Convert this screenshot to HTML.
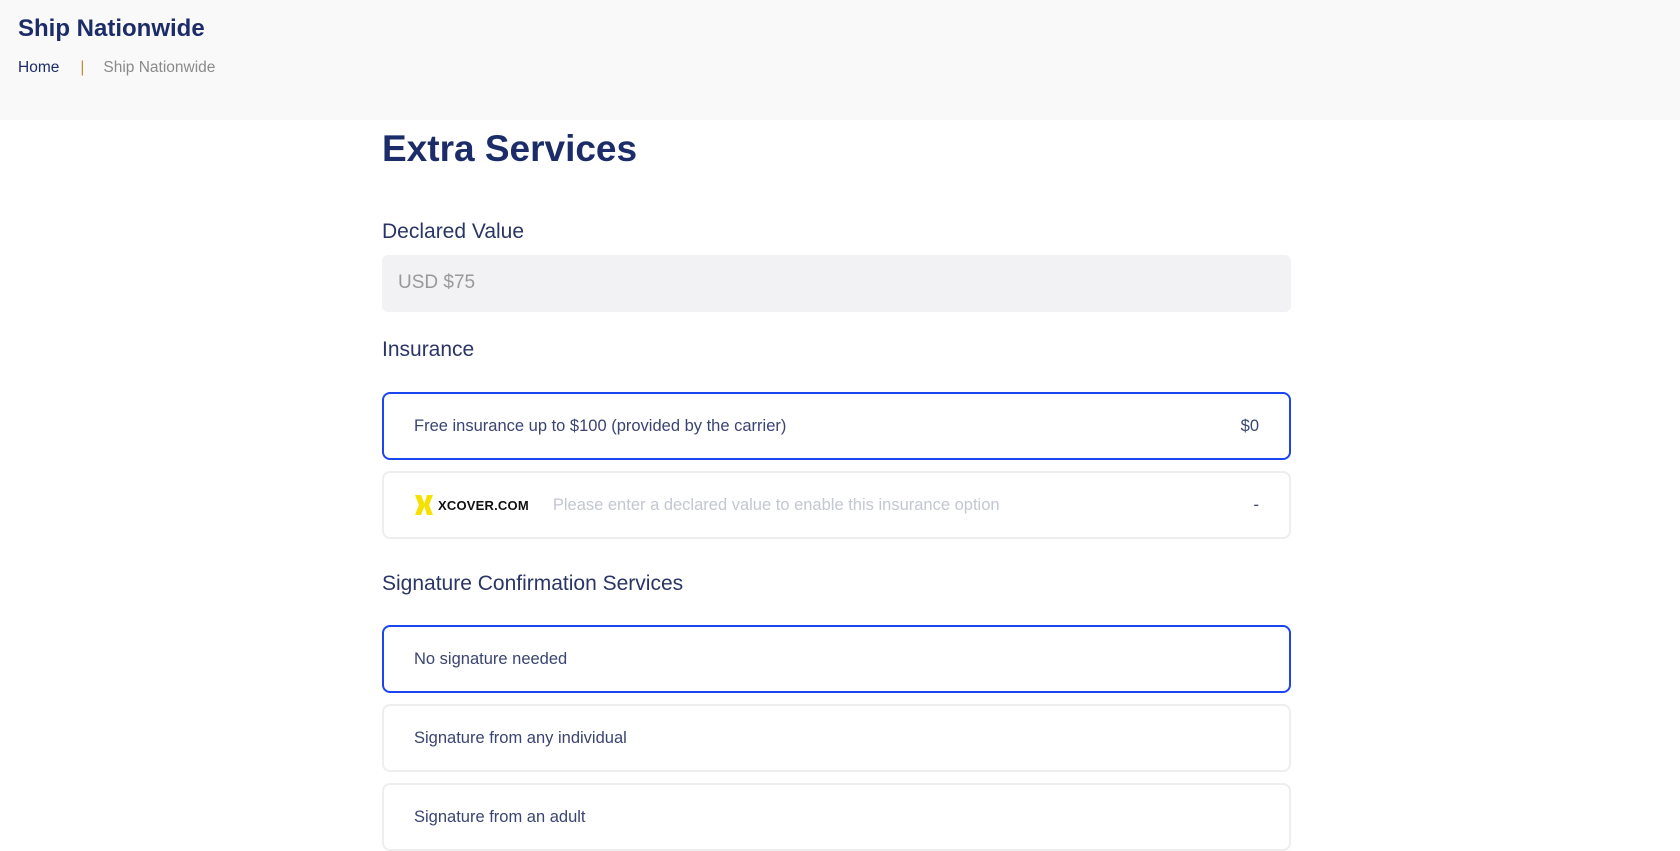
<!DOCTYPE html>
<html><head><meta charset="utf-8"><style>
*{box-sizing:border-box;margin:0;padding:0}
body{width:1680px;height:848px;overflow:hidden;background:#fff;font-family:"Liberation Sans",sans-serif;position:relative}
.hdr{position:absolute;left:0;top:0;width:1680px;height:120px;background:#f9f9f9}
.t{position:absolute;left:18px;top:15px;font-size:24px;font-weight:bold;color:#1c2c68}
.bc{position:absolute;left:18px;top:59px;font-size:15.5px;color:#1c2c68}
.bc .sep{color:#c58a3a;margin:0 19px 0 21px}
.bc .cur{color:#8a8a8a}
h1{position:absolute;left:382px;top:128px;font-size:37px;color:#1c2c68;font-weight:bold}
.lbl{position:absolute;left:382px;font-size:21px;color:#2a3566}
.inp{position:absolute;left:382px;top:255px;width:909px;height:57px;background:#f2f2f4;border-radius:6px;font-size:19px;color:#999;padding:17px 16px}
.box{position:absolute;left:382px;width:909px;height:68px;border:2px solid #eee;border-radius:8px;font-size:16.5px;color:#3a4470;padding:0 30px;display:flex;align-items:center;justify-content:space-between}
.box.sel{border-color:#1a45f0}
.xc{display:flex;align-items:center}
.xc b{font-size:13px;color:#111;margin:0 24px 0 4px;letter-spacing:0.2px}
.xc span{color:#c3c7d0}
</style></head><body>
<div class="hdr"><div class="t">Ship Nationwide</div>
<div class="bc">Home<span class="sep">|</span><span class="cur">Ship Nationwide</span></div></div>
<h1>Extra Services</h1>
<div class="lbl" style="top:220px">Declared Value</div>
<div class="inp">USD $75</div>
<div class="lbl" style="top:338px">Insurance</div>
<div class="box sel" style="top:392px"><span>Free insurance up to $100 (provided by the carrier)</span><span>$0</span></div>
<div class="box" style="top:471px"><div class="xc"><svg width="20" height="20" viewBox="0 0 20 20"><path d="M1 0h6l4 10-4 10H1l4-10z" fill="#f5e000"/><path d="M13 0h6l-4 10 4 10h-6l-3-10z" fill="#f5e000"/></svg><b>XCOVER.COM</b><span>Please enter a declared value to enable this insurance option</span></div><span>-</span></div>
<div class="lbl" style="top:572px">Signature Confirmation Services</div>
<div class="box sel" style="top:625px"><span>No signature needed</span></div>
<div class="box" style="top:704px"><span>Signature from any individual</span></div>
<div class="box" style="top:783px"><span>Signature from an adult</span></div>
</body></html>
